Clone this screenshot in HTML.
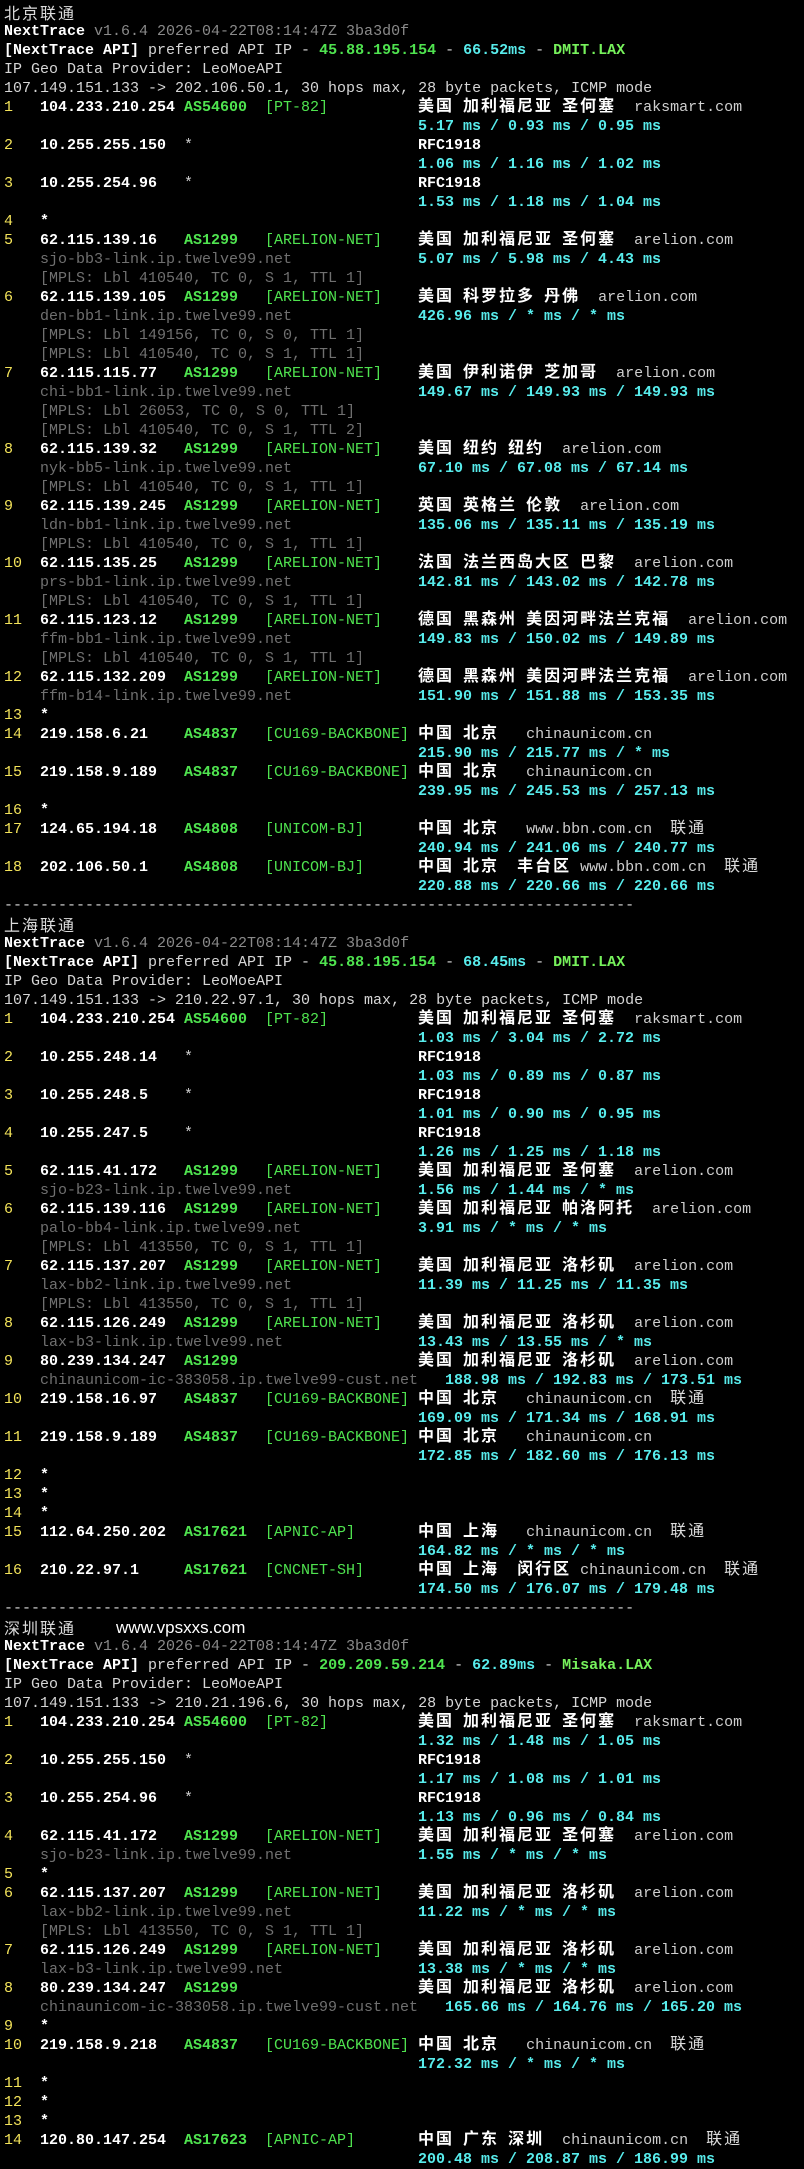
<!DOCTYPE html>
<html><head><meta charset="utf-8">
<style>
html,body{margin:0;padding:0;background:#000;}
body{width:804px;height:2166px;overflow:hidden;}
#w{padding:3px 0 0 4px;font-family:"Liberation Mono","Noto Sans CJK SC",monospace;font-size:15px;line-height:19px;color:#d6d6d6;}
.r{position:relative;height:19px;white-space:pre;overflow:visible;}
.r>*{position:absolute;top:0;}
.t>*{position:static;}
.n{left:0;color:#f3e35a;}
.ip{left:36px;color:#fff;font-weight:bold;}
.as{left:180px;color:#4fe34f;font-weight:bold;}
.tg{left:261px;color:#4fe34f;}
.g{left:414px;color:#fff;font-weight:bold;}
.l{left:414px;color:#58ecec;font-weight:bold;}
.h{left:36px;color:#707070;}
.st{left:180px;color:#cfcfcf;}
.sx{left:36px;color:#fff;font-weight:bold;}
i{font-style:normal;font-family:"Noto Sans CJK SC","WenQuanYi Zen Hei",sans-serif;font-size:16px;letter-spacing:2px;font-weight:bold;color:#fff;display:inline-block;vertical-align:top;height:19px;line-height:19px;position:relative;top:-3px;}
i.m{font-weight:normal;color:#dcdcdc;}
em{font-style:normal;font-weight:normal;color:#cfcfcf;}
.wb{color:#fff;font-weight:bold;}
.gr{color:#8a8a8a;}
.gn{color:#4fe34f;font-weight:bold;}
.cy{color:#58ecec;font-weight:bold;}
.g2{color:#77f25c;font-weight:bold;}
.url{font-family:"Liberation Sans",sans-serif;font-size:17px;color:#fff;margin-left:40px;}
</style></head><body><div id="w">
<div class="r t"><i class="m">北京联通</i></div>
<div class="r t"><span class="wb">NextTrace</span><span class="gr"> v1.6.4 2026-04-22T08:14:47Z 3ba3d0f</span></div>
<div class="r t"><span class="wb">[NextTrace API]</span> preferred API IP - <span class="gn">45.88.195.154</span> - <span class="cy">66.52ms</span> - <span class="g2">DMIT.LAX</span></div>
<div class="r t">IP Geo Data Provider: LeoMoeAPI</div>
<div class="r t">107.149.151.133 -&gt; 202.106.50.1, 30 hops max, 28 byte packets, ICMP mode</div>
<div class="r"><span class="n">1</span><span class="ip">104.233.210.254</span><span class="as">AS54600</span><span class="tg">[PT-82]</span><span class="g"><i>美国</i> <i>加利福尼亚</i> <i>圣何塞</i>  <em>raksmart.com</em></span></div>
<div class="r"><span class="l">5.17 ms / 0.93 ms / 0.95 ms</span></div>
<div class="r"><span class="n">2</span><span class="ip">10.255.255.150</span><span class="st">*</span><span class="g">RFC1918</span></div>
<div class="r"><span class="l">1.06 ms / 1.16 ms / 1.02 ms</span></div>
<div class="r"><span class="n">3</span><span class="ip">10.255.254.96</span><span class="st">*</span><span class="g">RFC1918</span></div>
<div class="r"><span class="l">1.53 ms / 1.18 ms / 1.04 ms</span></div>
<div class="r"><span class="n">4</span><span class="sx">*</span></div>
<div class="r"><span class="n">5</span><span class="ip">62.115.139.16</span><span class="as">AS1299</span><span class="tg">[ARELION-NET]</span><span class="g"><i>美国</i> <i>加利福尼亚</i> <i>圣何塞</i>  <em>arelion.com</em></span></div>
<div class="r"><span class="h">sjo-bb3-link.ip.twelve99.net</span><span class="l">5.07 ms / 5.98 ms / 4.43 ms</span></div>
<div class="r"><span class="h">[MPLS: Lbl 410540, TC 0, S 1, TTL 1]</span></div>
<div class="r"><span class="n">6</span><span class="ip">62.115.139.105</span><span class="as">AS1299</span><span class="tg">[ARELION-NET]</span><span class="g"><i>美国</i> <i>科罗拉多</i> <i>丹佛</i>  <em>arelion.com</em></span></div>
<div class="r"><span class="h">den-bb1-link.ip.twelve99.net</span><span class="l">426.96 ms / * ms / * ms</span></div>
<div class="r"><span class="h">[MPLS: Lbl 149156, TC 0, S 0, TTL 1]</span></div>
<div class="r"><span class="h">[MPLS: Lbl 410540, TC 0, S 1, TTL 1]</span></div>
<div class="r"><span class="n">7</span><span class="ip">62.115.115.77</span><span class="as">AS1299</span><span class="tg">[ARELION-NET]</span><span class="g"><i>美国</i> <i>伊利诺伊</i> <i>芝加哥</i>  <em>arelion.com</em></span></div>
<div class="r"><span class="h">chi-bb1-link.ip.twelve99.net</span><span class="l">149.67 ms / 149.93 ms / 149.93 ms</span></div>
<div class="r"><span class="h">[MPLS: Lbl 26053, TC 0, S 0, TTL 1]</span></div>
<div class="r"><span class="h">[MPLS: Lbl 410540, TC 0, S 1, TTL 2]</span></div>
<div class="r"><span class="n">8</span><span class="ip">62.115.139.32</span><span class="as">AS1299</span><span class="tg">[ARELION-NET]</span><span class="g"><i>美国</i> <i>纽约</i> <i>纽约</i>  <em>arelion.com</em></span></div>
<div class="r"><span class="h">nyk-bb5-link.ip.twelve99.net</span><span class="l">67.10 ms / 67.08 ms / 67.14 ms</span></div>
<div class="r"><span class="h">[MPLS: Lbl 410540, TC 0, S 1, TTL 1]</span></div>
<div class="r"><span class="n">9</span><span class="ip">62.115.139.245</span><span class="as">AS1299</span><span class="tg">[ARELION-NET]</span><span class="g"><i>英国</i> <i>英格兰</i> <i>伦敦</i>  <em>arelion.com</em></span></div>
<div class="r"><span class="h">ldn-bb1-link.ip.twelve99.net</span><span class="l">135.06 ms / 135.11 ms / 135.19 ms</span></div>
<div class="r"><span class="h">[MPLS: Lbl 410540, TC 0, S 1, TTL 1]</span></div>
<div class="r"><span class="n">10</span><span class="ip">62.115.135.25</span><span class="as">AS1299</span><span class="tg">[ARELION-NET]</span><span class="g"><i>法国</i> <i>法兰西岛大区</i> <i>巴黎</i>  <em>arelion.com</em></span></div>
<div class="r"><span class="h">prs-bb1-link.ip.twelve99.net</span><span class="l">142.81 ms / 143.02 ms / 142.78 ms</span></div>
<div class="r"><span class="h">[MPLS: Lbl 410540, TC 0, S 1, TTL 1]</span></div>
<div class="r"><span class="n">11</span><span class="ip">62.115.123.12</span><span class="as">AS1299</span><span class="tg">[ARELION-NET]</span><span class="g"><i>德国</i> <i>黑森州</i> <i>美因河畔法兰克福</i>  <em>arelion.com</em></span></div>
<div class="r"><span class="h">ffm-bb1-link.ip.twelve99.net</span><span class="l">149.83 ms / 150.02 ms / 149.89 ms</span></div>
<div class="r"><span class="h">[MPLS: Lbl 410540, TC 0, S 1, TTL 1]</span></div>
<div class="r"><span class="n">12</span><span class="ip">62.115.132.209</span><span class="as">AS1299</span><span class="tg">[ARELION-NET]</span><span class="g"><i>德国</i> <i>黑森州</i> <i>美因河畔法兰克福</i>  <em>arelion.com</em></span></div>
<div class="r"><span class="h">ffm-b14-link.ip.twelve99.net</span><span class="l">151.90 ms / 151.88 ms / 153.35 ms</span></div>
<div class="r"><span class="n">13</span><span class="sx">*</span></div>
<div class="r"><span class="n">14</span><span class="ip">219.158.6.21</span><span class="as">AS4837</span><span class="tg">[CU169-BACKBONE]</span><span class="g"><i>中国</i> <i>北京</i>   <em>chinaunicom.cn</em></span></div>
<div class="r"><span class="l">215.90 ms / 215.77 ms / * ms</span></div>
<div class="r"><span class="n">15</span><span class="ip">219.158.9.189</span><span class="as">AS4837</span><span class="tg">[CU169-BACKBONE]</span><span class="g"><i>中国</i> <i>北京</i>   <em>chinaunicom.cn</em></span></div>
<div class="r"><span class="l">239.95 ms / 245.53 ms / 257.13 ms</span></div>
<div class="r"><span class="n">16</span><span class="sx">*</span></div>
<div class="r"><span class="n">17</span><span class="ip">124.65.194.18</span><span class="as">AS4808</span><span class="tg">[UNICOM-BJ]</span><span class="g"><i>中国</i> <i>北京</i>   <em>www.bbn.com.cn</em>  <i class="m">联通</i></span></div>
<div class="r"><span class="l">240.94 ms / 241.06 ms / 240.77 ms</span></div>
<div class="r"><span class="n">18</span><span class="ip">202.106.50.1</span><span class="as">AS4808</span><span class="tg">[UNICOM-BJ]</span><span class="g"><i>中国</i> <i>北京</i>  <i>丰台区</i> <em>www.bbn.com.cn</em>  <i class="m">联通</i></span></div>
<div class="r"><span class="l">220.88 ms / 220.66 ms / 220.66 ms</span></div>
<div class="r t">----------------------------------------------------------------------</div>
<div class="r t"><i class="m">上海联通</i></div>
<div class="r t"><span class="wb">NextTrace</span><span class="gr"> v1.6.4 2026-04-22T08:14:47Z 3ba3d0f</span></div>
<div class="r t"><span class="wb">[NextTrace API]</span> preferred API IP - <span class="gn">45.88.195.154</span> - <span class="cy">68.45ms</span> - <span class="g2">DMIT.LAX</span></div>
<div class="r t">IP Geo Data Provider: LeoMoeAPI</div>
<div class="r t">107.149.151.133 -&gt; 210.22.97.1, 30 hops max, 28 byte packets, ICMP mode</div>
<div class="r"><span class="n">1</span><span class="ip">104.233.210.254</span><span class="as">AS54600</span><span class="tg">[PT-82]</span><span class="g"><i>美国</i> <i>加利福尼亚</i> <i>圣何塞</i>  <em>raksmart.com</em></span></div>
<div class="r"><span class="l">1.03 ms / 3.04 ms / 2.72 ms</span></div>
<div class="r"><span class="n">2</span><span class="ip">10.255.248.14</span><span class="st">*</span><span class="g">RFC1918</span></div>
<div class="r"><span class="l">1.03 ms / 0.89 ms / 0.87 ms</span></div>
<div class="r"><span class="n">3</span><span class="ip">10.255.248.5</span><span class="st">*</span><span class="g">RFC1918</span></div>
<div class="r"><span class="l">1.01 ms / 0.90 ms / 0.95 ms</span></div>
<div class="r"><span class="n">4</span><span class="ip">10.255.247.5</span><span class="st">*</span><span class="g">RFC1918</span></div>
<div class="r"><span class="l">1.26 ms / 1.25 ms / 1.18 ms</span></div>
<div class="r"><span class="n">5</span><span class="ip">62.115.41.172</span><span class="as">AS1299</span><span class="tg">[ARELION-NET]</span><span class="g"><i>美国</i> <i>加利福尼亚</i> <i>圣何塞</i>  <em>arelion.com</em></span></div>
<div class="r"><span class="h">sjo-b23-link.ip.twelve99.net</span><span class="l">1.56 ms / 1.44 ms / * ms</span></div>
<div class="r"><span class="n">6</span><span class="ip">62.115.139.116</span><span class="as">AS1299</span><span class="tg">[ARELION-NET]</span><span class="g"><i>美国</i> <i>加利福尼亚</i> <i>帕洛阿托</i>  <em>arelion.com</em></span></div>
<div class="r"><span class="h">palo-bb4-link.ip.twelve99.net</span><span class="l">3.91 ms / * ms / * ms</span></div>
<div class="r"><span class="h">[MPLS: Lbl 413550, TC 0, S 1, TTL 1]</span></div>
<div class="r"><span class="n">7</span><span class="ip">62.115.137.207</span><span class="as">AS1299</span><span class="tg">[ARELION-NET]</span><span class="g"><i>美国</i> <i>加利福尼亚</i> <i>洛杉矶</i>  <em>arelion.com</em></span></div>
<div class="r"><span class="h">lax-bb2-link.ip.twelve99.net</span><span class="l">11.39 ms / 11.25 ms / 11.35 ms</span></div>
<div class="r"><span class="h">[MPLS: Lbl 413550, TC 0, S 1, TTL 1]</span></div>
<div class="r"><span class="n">8</span><span class="ip">62.115.126.249</span><span class="as">AS1299</span><span class="tg">[ARELION-NET]</span><span class="g"><i>美国</i> <i>加利福尼亚</i> <i>洛杉矶</i>  <em>arelion.com</em></span></div>
<div class="r"><span class="h">lax-b3-link.ip.twelve99.net</span><span class="l">13.43 ms / 13.55 ms / * ms</span></div>
<div class="r"><span class="n">9</span><span class="ip">80.239.134.247</span><span class="as">AS1299</span><span class="g"><i>美国</i> <i>加利福尼亚</i> <i>洛杉矶</i>  <em>arelion.com</em></span></div>
<div class="r"><span class="h">chinaunicom-ic-383058.ip.twelve99-cust.net</span><span class="l" style="left:441px">188.98 ms / 192.83 ms / 173.51 ms</span></div>
<div class="r"><span class="n">10</span><span class="ip">219.158.16.97</span><span class="as">AS4837</span><span class="tg">[CU169-BACKBONE]</span><span class="g"><i>中国</i> <i>北京</i>   <em>chinaunicom.cn</em>  <i class="m">联通</i></span></div>
<div class="r"><span class="l">169.09 ms / 171.34 ms / 168.91 ms</span></div>
<div class="r"><span class="n">11</span><span class="ip">219.158.9.189</span><span class="as">AS4837</span><span class="tg">[CU169-BACKBONE]</span><span class="g"><i>中国</i> <i>北京</i>   <em>chinaunicom.cn</em></span></div>
<div class="r"><span class="l">172.85 ms / 182.60 ms / 176.13 ms</span></div>
<div class="r"><span class="n">12</span><span class="sx">*</span></div>
<div class="r"><span class="n">13</span><span class="sx">*</span></div>
<div class="r"><span class="n">14</span><span class="sx">*</span></div>
<div class="r"><span class="n">15</span><span class="ip">112.64.250.202</span><span class="as">AS17621</span><span class="tg">[APNIC-AP]</span><span class="g"><i>中国</i> <i>上海</i>   <em>chinaunicom.cn</em>  <i class="m">联通</i></span></div>
<div class="r"><span class="l">164.82 ms / * ms / * ms</span></div>
<div class="r"><span class="n">16</span><span class="ip">210.22.97.1</span><span class="as">AS17621</span><span class="tg">[CNCNET-SH]</span><span class="g"><i>中国</i> <i>上海</i>  <i>闵行区</i> <em>chinaunicom.cn</em>  <i class="m">联通</i></span></div>
<div class="r"><span class="l">174.50 ms / 176.07 ms / 179.48 ms</span></div>
<div class="r t">----------------------------------------------------------------------</div>
<div class="r t"><i class="m">深圳联通</i><span class="url">www.vpsxxs.com</span></div>
<div class="r t"><span class="wb">NextTrace</span><span class="gr"> v1.6.4 2026-04-22T08:14:47Z 3ba3d0f</span></div>
<div class="r t"><span class="wb">[NextTrace API]</span> preferred API IP - <span class="gn">209.209.59.214</span> - <span class="cy">62.89ms</span> - <span class="g2">Misaka.LAX</span></div>
<div class="r t">IP Geo Data Provider: LeoMoeAPI</div>
<div class="r t">107.149.151.133 -&gt; 210.21.196.6, 30 hops max, 28 byte packets, ICMP mode</div>
<div class="r"><span class="n">1</span><span class="ip">104.233.210.254</span><span class="as">AS54600</span><span class="tg">[PT-82]</span><span class="g"><i>美国</i> <i>加利福尼亚</i> <i>圣何塞</i>  <em>raksmart.com</em></span></div>
<div class="r"><span class="l">1.32 ms / 1.48 ms / 1.05 ms</span></div>
<div class="r"><span class="n">2</span><span class="ip">10.255.255.150</span><span class="st">*</span><span class="g">RFC1918</span></div>
<div class="r"><span class="l">1.17 ms / 1.08 ms / 1.01 ms</span></div>
<div class="r"><span class="n">3</span><span class="ip">10.255.254.96</span><span class="st">*</span><span class="g">RFC1918</span></div>
<div class="r"><span class="l">1.13 ms / 0.96 ms / 0.84 ms</span></div>
<div class="r"><span class="n">4</span><span class="ip">62.115.41.172</span><span class="as">AS1299</span><span class="tg">[ARELION-NET]</span><span class="g"><i>美国</i> <i>加利福尼亚</i> <i>圣何塞</i>  <em>arelion.com</em></span></div>
<div class="r"><span class="h">sjo-b23-link.ip.twelve99.net</span><span class="l">1.55 ms / * ms / * ms</span></div>
<div class="r"><span class="n">5</span><span class="sx">*</span></div>
<div class="r"><span class="n">6</span><span class="ip">62.115.137.207</span><span class="as">AS1299</span><span class="tg">[ARELION-NET]</span><span class="g"><i>美国</i> <i>加利福尼亚</i> <i>洛杉矶</i>  <em>arelion.com</em></span></div>
<div class="r"><span class="h">lax-bb2-link.ip.twelve99.net</span><span class="l">11.22 ms / * ms / * ms</span></div>
<div class="r"><span class="h">[MPLS: Lbl 413550, TC 0, S 1, TTL 1]</span></div>
<div class="r"><span class="n">7</span><span class="ip">62.115.126.249</span><span class="as">AS1299</span><span class="tg">[ARELION-NET]</span><span class="g"><i>美国</i> <i>加利福尼亚</i> <i>洛杉矶</i>  <em>arelion.com</em></span></div>
<div class="r"><span class="h">lax-b3-link.ip.twelve99.net</span><span class="l">13.38 ms / * ms / * ms</span></div>
<div class="r"><span class="n">8</span><span class="ip">80.239.134.247</span><span class="as">AS1299</span><span class="g"><i>美国</i> <i>加利福尼亚</i> <i>洛杉矶</i>  <em>arelion.com</em></span></div>
<div class="r"><span class="h">chinaunicom-ic-383058.ip.twelve99-cust.net</span><span class="l" style="left:441px">165.66 ms / 164.76 ms / 165.20 ms</span></div>
<div class="r"><span class="n">9</span><span class="sx">*</span></div>
<div class="r"><span class="n">10</span><span class="ip">219.158.9.218</span><span class="as">AS4837</span><span class="tg">[CU169-BACKBONE]</span><span class="g"><i>中国</i> <i>北京</i>   <em>chinaunicom.cn</em>  <i class="m">联通</i></span></div>
<div class="r"><span class="l">172.32 ms / * ms / * ms</span></div>
<div class="r"><span class="n">11</span><span class="sx">*</span></div>
<div class="r"><span class="n">12</span><span class="sx">*</span></div>
<div class="r"><span class="n">13</span><span class="sx">*</span></div>
<div class="r"><span class="n">14</span><span class="ip">120.80.147.254</span><span class="as">AS17623</span><span class="tg">[APNIC-AP]</span><span class="g"><i>中国</i> <i>广东</i> <i>深圳</i>  <em>chinaunicom.cn</em>  <i class="m">联通</i></span></div>
<div class="r"><span class="l">200.48 ms / 208.87 ms / 186.99 ms</span></div>
</div></body></html>
